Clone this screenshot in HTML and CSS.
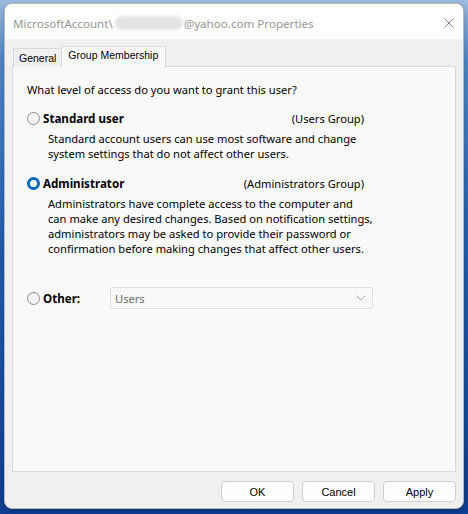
FILE: index.html
```html
<!DOCTYPE html>
<html>
<head>
<meta charset="utf-8">
<link rel="stylesheet" href="styles.css">
</head>
<body>
<div class="window">
  <div class="titlebar">
    <span class="title">MicrosoftAccount\<span class="redact"></span>@yahoo.com Properties</span>
    <svg class="close" width="10" height="10" viewBox="0 0 10 10"><path d="M0.5 0.5L9.5 9.5M9.5 0.5L0.5 9.5" stroke="#8a8a8a" stroke-width="1" fill="none"/></svg>
  </div>
  <div class="body">
    <div class="tabs">
      <div class="tab">General</div>
      <div class="tab active">Group Membership</div>
    </div>
    <div class="panel">
      <p class="question">What level of access do you want to grant this user?</p>

      <div class="option">
        <span class="radio"></span>
        <span class="label">Standard user</span>
        <span class="group">(Users Group)</span>
      </div>
      <p class="desc">Standard account users can use most software and change<br>system settings that do not affect other users.</p>

      <div class="option admin">
        <span class="radio checked"></span>
        <span class="label">Administrator</span>
        <span class="group">(Administrators Group)</span>
      </div>
      <p class="desc">Administrators have complete access to the computer and<br>can make any desired changes. Based on notification settings,<br>administrators may be asked to provide their password or<br>confirmation before making changes that affect other users.</p>

      <div class="option other">
        <span class="radio"></span>
        <span class="label other-label">Other:</span>
        <div class="select">
          <span>Users</span>
          <svg width="10" height="6" viewBox="0 0 10 6"><path d="M0.5 0.5L5 5L9.5 0.5" stroke="#b5b5b5" stroke-width="1" fill="none"/></svg>
        </div>
      </div>
    </div>
    <div class="buttons">
      <button class="btn">OK</button>
      <button class="btn">Cancel</button>
      <button class="btn">Apply</button>
    </div>
  </div>
</div>
</body>
</html>
```
FILE: styles.css
```css
html, body {
  margin: 0;
  padding: 0;
}
body {
  width: 468px;
  height: 514px;
  overflow: hidden;
  background: linear-gradient(180deg, #9dbde2 0px, #4f8ad0 60px, #1d5fb8 250px, #0c3f96 514px);
  font-family: "Noto Sans", "Segoe UI", sans-serif;
  font-size: 11.15px;
  color: #000;
}
.window {
  margin: 3px 4px 0 4px;
  width: 458px;
  height: 504px;
  border: 1px solid #b9b9b9;
  border-radius: 8px;
  overflow: hidden;
  background: #f0f0f0;
  box-shadow: 0 2px 6px rgba(0,0,0,0.25);
  display: flex;
  flex-direction: column;
}
.titlebar {
  height: 35px;
  box-sizing: border-box;
  padding: 3px 9px 0 8px;
  background: #ffffff;
  display: flex;
  align-items: center;
  justify-content: space-between;
}
.title {
  color: #969696;
  font-size: 11.6px;
  display: flex;
  align-items: center;
  white-space: nowrap;
}
.redact {
  display: inline-block;
  width: 68px;
  height: 14px;
  margin: 0 1px 0 2px;
  background: #e4e4e4;
  border-radius: 7px;
  filter: blur(1.5px);
}
.close {
  display: block;
}
.body {
  flex: 1;
  display: flex;
  flex-direction: column;
  padding: 7px 7px 0 7px;
}
.tabs {
  display: flex;
  align-items: flex-end;
  padding-left: 1px;
  height: 21px;
  position: relative;
  z-index: 1;
  margin-bottom: -1px;
}
.tab {
  font-family: "Liberation Sans", Arial, sans-serif;
  font-size: 10.5px;
  height: 19px;
  line-height: 19px;
  padding: 0 5px;
  border: 1px solid #d9d9d9;
  border-bottom: none;
  background: #f0f0f0;
  box-sizing: border-box;
}
.tab.active {
  height: 21px;
  line-height: 17px;
  padding: 0 7px 0 6px;
  background: #f9f9f9;
  margin-left: -1px;
}
.panel {
  height: 406px;
  box-sizing: border-box;
  border: 1px solid #d9d9d9;
  background: #f9f9f9;
  padding: 15px 0 0 14px;
  line-height: 15px;
}
.question {
  margin: 0;
}
.option {
  display: flex;
  align-items: center;
  width: 337px;
  margin-top: 14px;
  height: 15px;
}
.option.admin {
  margin-top: 15px;
}
.option.other {
  width: auto;
  margin-top: 31px;
  height: 22px;
}
.radio {
  width: 13px;
  height: 13px;
  box-sizing: border-box;
  border-radius: 50%;
  border: 1px solid #8c8c8c;
  background: #f4f4f4;
  flex: none;
}
.radio.checked {
  border: 3px solid #0067c0;
  background: #ffffff;
}
.label {
  font-weight: bold;
  font-size: 11.6px;
  margin-left: 3px;
}
.other-label {
  width: 67px;
  flex: none;
}
.group {
  margin-left: auto;
}
.desc {
  margin: 5px 0 0 21px;
}
.select {
  width: 263px;
  height: 22px;
  box-sizing: border-box;
  border: 1px solid #e0e0e0;
  border-radius: 2px;
  background: #f9f9f9;
  display: flex;
  align-items: center;
  justify-content: space-between;
  padding: 0 6px 0 4px;
  color: #6d6d6d;
}
.buttons {
  display: flex;
  justify-content: flex-end;
  gap: 8px;
  padding: 9px 0 0 0;
}
.btn {
  font-family: "Liberation Sans", Arial, sans-serif;
  font-size: 11px;
  width: 73px;
  height: 21px;
  border: 1px solid #d0d0d0;
  border-radius: 4px;
  background: #fdfdfd;
  color: #000;
  padding: 0;
}
```
